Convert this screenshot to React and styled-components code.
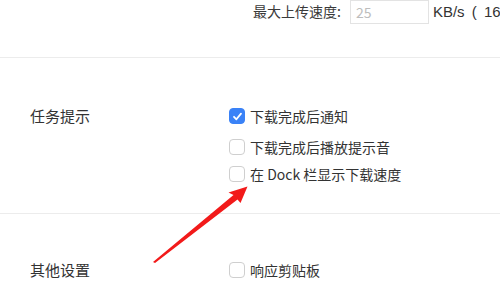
import React from "react";
import styled, { createGlobalStyle } from "styled-components";

const Global = createGlobalStyle`
  html, body { margin: 0; padding: 0; background: #fff; }
  body {
    width: 500px; height: 282px; overflow: hidden;
    font-family: "Noto Sans CJK SC", "Noto Sans", sans-serif;
    color: #333;
  }
`;

const Page = styled.div`
  position: relative;
  width: 500px;
  height: 282px;
  overflow: hidden;
`;

const Section = styled.section`
  display: flex;
  align-items: flex-start;
  height: ${(p) => p.$h}px;
  padding-top: ${(p) => p.$pt}px;
  box-sizing: border-box;
  border-bottom: ${(p) => (p.$divider ? "1px solid #ececec" : "none")};
`;

const TopRow = styled.div`
  display: flex;
  align-items: center;
  margin-left: 253px;
  margin-top: -1px;
  height: 24px;
  white-space: nowrap;
  font-size: 14px;
`;

const FieldLabel = styled.span`
  color: #3a3a3a;
  margin-right: 9px;
  line-height: 20px;
`;

const SpeedInput = styled.div`
  width: 72px;
  height: 22px;
  border: 1px solid #e3e3e3;
  padding-left: 5px;
  display: flex;
  align-items: center;
  color: #bdbdbd;
  font-size: 14px;
  margin-top: 2px;
`;

const Unit = styled.span`
  margin-left: 4px;
  color: #333;
  font-family: "Liberation Sans", "Noto Sans CJK SC", sans-serif;
  font-size: 15px;
  word-spacing: 3px;
`;

const GroupLabel = styled.div`
  width: 199px;
  padding-left: 30px;
  font-size: 15px;
  line-height: 20px;
  color: #333;
  flex-shrink: 0;
`;

const Options = styled.div`
  display: flex;
  flex-direction: column;
`;

const Option = styled.label`
  display: flex;
  align-items: center;
  height: 20px;
  margin-top: ${(p) => p.$mt || 0}px;
  font-size: 14px;
  color: #333;
  white-space: nowrap;
`;

const Box = styled.span`
  width: 16px;
  height: 16px;
  box-sizing: border-box;
  border-radius: 4px;
  margin-right: 5px;
  display: inline-flex;
  align-items: center;
  justify-content: center;
  background: ${(p) => (p.$checked ? "#3a82f7" : "#fff")};
  border: 1px solid ${(p) => (p.$checked ? "#3a82f7" : "#cfcfcf")};
`;

const Arrow = styled.svg`
  position: absolute;
  left: 0;
  top: 0;
  pointer-events: none;
`;

const Check = ({ checked }) => (
  <Box $checked={checked}>
    {checked && (
      <svg width="11" height="11" viewBox="0 0 11 11">
        <path d="M2 5.8 L4.4 8.3 L9 2.6" fill="none" stroke="#fff" strokeWidth="1.8" strokeLinecap="round" strokeLinejoin="round" />
      </svg>
    )}
  </Box>
);

export default function App() {
  return (
    <Page>
      <Global />
      <Section $h={58} $pt={0} $divider>
        <TopRow>
          <FieldLabel>最大上传速度:</FieldLabel>
          <SpeedInput>25</SpeedInput>
          <Unit>KB/s ( 16</Unit>
        </TopRow>
      </Section>
      <Section $h={156} $pt={48} $divider>
        <GroupLabel>任务提示</GroupLabel>
        <Options>
          <Option>
            <Check checked />
            下载完成后通知
          </Option>
          <Option $mt={11}>
            <Check />
            下载完成后播放提示音
          </Option>
          <Option $mt={7}>
            <Check />
            在 Dock 栏显示下载速度
          </Option>
        </Options>
      </Section>
      <Section $h={68} $pt={46}>
        <GroupLabel>其他设置</GroupLabel>
        <Options>
          <Option>
            <Check />
            响应剪贴板
          </Option>
        </Options>
      </Section>
      <Arrow width="500" height="282" viewBox="0 0 500 282">
        <polygon
          points="153,262 233.5,195 228.5,192.5 247.5,186.5 240.5,203 237.5,199.5 155,263"
          fill="#f21a1a"
        />
      </Arrow>
    </Page>
  );
}
